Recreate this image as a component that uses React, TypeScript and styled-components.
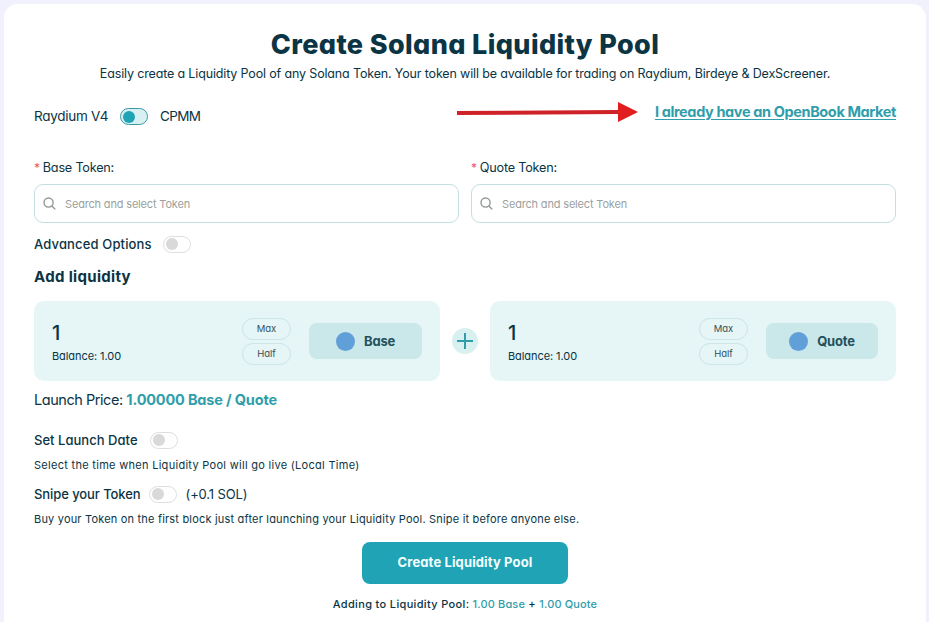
import React from "react";
import styled, { createGlobalStyle } from "styled-components";

const GlobalStyle = createGlobalStyle`
  * { box-sizing: border-box; }
  body {
    margin: 0;
    background: #f0f1fd;
    color: #0b3444;
    font-family: Inter, "Liberation Sans", sans-serif;
    font-feature-settings: "cv11";
    overflow: hidden;
  }
`;

const Card = styled.main`
  width: 922px;
  height: 640px;
  margin: 4px 0 0 4px;
  padding: 22px 30px 0;
  border-radius: 14px;
  background: #fefffe;
  white-space: nowrap;
`;

const Title = styled.h1`
  margin: 0;
  line-height: 37px;
  font-size: 27px;
  font-weight: 800;
  letter-spacing: 0.38px;
  text-align: center;
`;

const Subtitle = styled.p`
  margin: 0;
  line-height: 21px;
  font-size: 12.5px;
  letter-spacing: -0.15px;
  text-align: center;
`;

const TopBar = styled.div`
  display: flex;
  align-items: center;
  height: 65px;
`;

const PoolType = styled.span<{ $tight?: boolean }>`
  margin-top: -2px;
  font-size: 13.5px;
  letter-spacing: ${(p) => (p.$tight ? "-0.7px" : "-0.27px")};
`;

const Switch = styled.button<{ $active?: boolean; $left: number; $right?: number }>`
  display: flex;
  align-items: center;
  width: 28px;
  height: 17px;
  margin: 0 ${(p) => p.$right ?? 0}px 0 ${(p) => p.$left}px;
  padding: 0 2px;
  border: 1px solid ${(p) => (p.$active ? "#3a9ba6" : "#dcdfdf")};
  border-radius: 9px;
  background: ${(p) => (p.$active ? "#d8f0f1" : "#fefefe")};

  &::before {
    content: "";
    width: 12px;
    height: 12px;
    border-radius: 50%;
    background: ${(p) => (p.$active ? "#1fa3b5" : "#d9d9d9")};
  }
`;

const Arrow = styled.svg`
  display: block;
  width: 183px;
  height: 20px;
  margin: -9px 16px 0 auto;
`;

const MarketLink = styled.a`
  margin-top: -11px;
  color: #309dab;
  font-size: 14.5px;
  font-weight: 700;
  letter-spacing: -0.38px;
  text-decoration: underline;
  text-decoration-thickness: 1px;
  text-underline-offset: 2px;
`;

const TokenGrid = styled.div`
  display: grid;
  grid-template-columns: 1fr 1fr;
  gap: 12px;
`;

const FieldLabel = styled.label`
  display: block;
  line-height: 38px;
  height: 35px;
  font-size: 12.7px;
  letter-spacing: -0.23px;
`;

const Required = styled.span`
  margin-right: 3px;
  color: #ee5565;
  font-size: 12px;
`;

const SearchBox = styled.div`
  display: flex;
  align-items: center;
  gap: 9px;
  height: 39px;
  padding: 0 8px;
  border: 1px solid #c3dfe2;
  border-radius: 9px;
  color: #9c9fa0;
  font-size: 11px;
  letter-spacing: -0.17px;
`;

const OptionRow = styled.div<{ $height: number; $top?: number }>`
  display: flex;
  align-items: center;
  height: ${(p) => p.$height}px;
  margin-top: ${(p) => p.$top ?? 0}px;
`;

const OptionLabel = styled.span<{ $spacing: number }>`
  font-size: 13px;
  font-weight: 500;
  letter-spacing: ${(p) => p.$spacing}px;
`;

const Fee = styled.span`
  margin-left: 9px;
  font-size: 13px;
  letter-spacing: -0.12px;
`;

const Hint = styled.p<{ $spacing: number }>`
  margin: 0;
  line-height: 18px;
  font-size: 11px;
  letter-spacing: ${(p) => p.$spacing}px;
`;

const SectionTitle = styled.h2`
  margin: 0 0 13px;
  line-height: 23px;
  font-size: 15px;
  font-weight: 700;
  letter-spacing: 0.33px;
`;

const LiquidityRow = styled.div`
  display: grid;
  grid-template-columns: 406px 50px 406px;
  align-items: center;
`;

const AmountPanel = styled.section`
  display: flex;
  align-items: center;
  height: 80px;
  padding: 0 18px;
  border-radius: 10px;
  background: #e6f5f5;
`;

const Amount = styled.div`
  flex: 1;
  font-size: 20px;
  font-weight: 500;
  line-height: 26px;
  padding-top: 4px;
`;

const Balance = styled.div`
  font-size: 11px;
  font-weight: 400;
  line-height: 20px;
  letter-spacing: -0.08px;
`;

const Presets = styled.div`
  display: grid;
  gap: 3px;
  margin: 0 18px 0 0;
`;

const Preset = styled.button`
  width: 49px;
  height: 22px;
  padding: 0;
  border: 1px solid #cbe5e8;
  border-radius: 11px;
  background: transparent;
  color: #34505c;
  font: inherit;
  font-size: 9.5px;
  font-feature-settings: inherit;
  line-height: 19px;
`;

const TokenButton = styled.button<{ $width: number }>`
  display: flex;
  align-items: center;
  justify-content: center;
  gap: 9px;
  width: ${(p) => p.$width}px;
  height: 36px;
  padding: 0;
  border: 0;
  border-radius: 8px;
  background: #cae8ea;
  color: #23505b;
  font: inherit;
  font-size: 13px;
  font-weight: 700;
  font-feature-settings: inherit;
  letter-spacing: -0.2px;

  &::before {
    content: "";
    width: 19px;
    height: 19px;
    border-radius: 50%;
    background: #609fd8;
  }
`;

const PlusBadge = styled.div`
  display: grid;
  place-items: center;
  justify-self: center;
  width: 26px;
  height: 26px;
  border-radius: 50%;
  background: #d9f0f0;
`;

const Price = styled.div`
  height: 38px;
  line-height: 38px;
  font-size: 14.5px;
  letter-spacing: -0.45px;
`;

const PriceValue = styled.strong`
  color: #309dab;
  letter-spacing: -0.17px;
`;

const Submit = styled.button`
  display: block;
  width: 206px;
  height: 42px;
  margin: 14px auto 0;
  padding: 0 0 2px;
  border: 0;
  border-radius: 8px;
  background: #1fa3b5;
  color: #f4ffff;
  font: inherit;
  font-size: 13px;
  font-weight: 700;
  font-feature-settings: inherit;
  letter-spacing: 0.13px;
`;

const Summary = styled.p`
  margin: 0;
  line-height: 41px;
  font-size: 11px;
  font-weight: 500;
  letter-spacing: 0.34px;
  text-align: center;
`;

const Accent = styled.span`
  color: #309dab;
  letter-spacing: 0.14px;
`;

function TokenField({ label }: { label: string }) {
  return (
    <div>
      <FieldLabel>
        <Required>*</Required>
        {label}
      </FieldLabel>
      <SearchBox>
        <svg width="13" height="13" viewBox="0 0 14 14" fill="none" stroke="#929899" strokeWidth="1.5" strokeLinecap="round">
          <circle cx="6" cy="6" r="4.9" />
          <path d="M9.6 9.6 12.8 12.8" />
        </svg>
        Search and select Token
      </SearchBox>
    </div>
  );
}

function LiquidityPanel({ token, buttonWidth }: { token: string; buttonWidth: number }) {
  return (
    <AmountPanel>
      <Amount>
        1<Balance>Balance: 1.00</Balance>
      </Amount>
      <Presets>
        <Preset>Max</Preset>
        <Preset>Half</Preset>
      </Presets>
      <TokenButton $width={buttonWidth}>{token}</TokenButton>
    </AmountPanel>
  );
}

export default function App() {
  return (
    <>
      <GlobalStyle />
      <Card>
        <Title>Create Solana Liquidity Pool</Title>
        <Subtitle>
          Easily create a Liquidity Pool of any Solana Token. Your token will be available for trading on Raydium, Birdeye &amp; DexScreener.
        </Subtitle>
        <TopBar>
          <PoolType>Raydium V4</PoolType>
          <Switch $active $left={12} $right={12} />
          <PoolType $tight>CPMM</PoolType>
          <Arrow viewBox="0 0 183 20">
            <path d="M1 9 163 8V12L1 13Z" fill="#cf2228" />
            <path d="M162 0 182 10 162 20Z" fill="#e21d20" />
          </Arrow>
          <MarketLink>I already have an OpenBook Market</MarketLink>
        </TopBar>
        <TokenGrid>
          <TokenField label="Base Token:" />
          <TokenField label="Quote Token:" />
        </TokenGrid>
        <OptionRow $height={42}>
          <OptionLabel $spacing={0.15}>Advanced Options</OptionLabel>
          <Switch $left={11} />
        </OptionRow>
        <SectionTitle>Add liquidity</SectionTitle>
        <LiquidityRow>
          <LiquidityPanel token="Base" buttonWidth={113} />
          <PlusBadge>
            <svg width="16" height="16" viewBox="0 0 16 16" stroke="#309dab" strokeWidth="2">
              <path d="M8 0V16M0 8H16" />
            </svg>
          </PlusBadge>
          <LiquidityPanel token="Quote" buttonWidth={112} />
        </LiquidityRow>
        <Price>
          Launch Price: <PriceValue>1.00000 Base / Quote</PriceValue>
        </Price>
        <OptionRow $height={32} $top={5}>
          <OptionLabel $spacing={0.03}>Set Launch Date</OptionLabel>
          <Switch $left={12} />
        </OptionRow>
        <Hint $spacing={0.29}>Select the time when Liquidity Pool will go live (Local Time)</Hint>
        <OptionRow $height={32} $top={4}>
          <OptionLabel $spacing={-0.08}>Snipe your Token</OptionLabel>
          <Switch $left={8} />
          <Fee>(+0.1 SOL)</Fee>
        </OptionRow>
        <Hint $spacing={0.19}>
          Buy your Token on the first block just after launching your Liquidity Pool. Snipe it before anyone else.
        </Hint>
        <Submit>Create Liquidity Pool</Submit>
        <Summary>
          Adding to Liquidity Pool: <Accent>1.00 Base</Accent> + <Accent>1.00 Quote</Accent>
        </Summary>
      </Card>
    </>
  );
}
